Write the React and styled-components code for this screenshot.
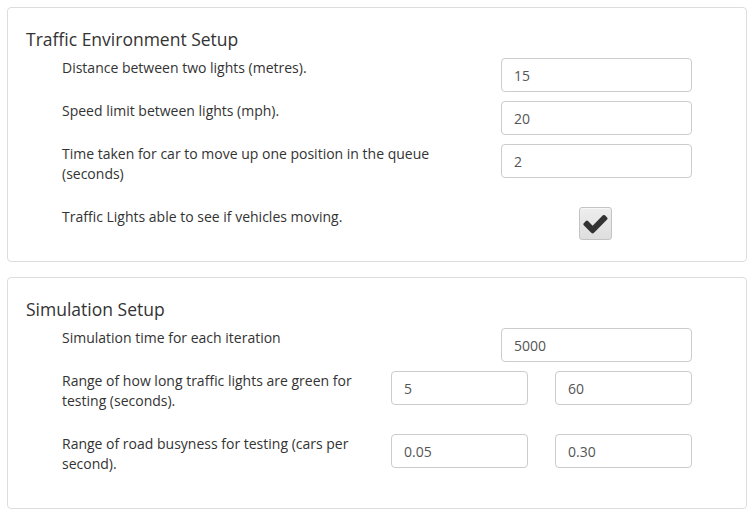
import React from "react";
import styled, { createGlobalStyle } from "styled-components";

const GlobalStyle = createGlobalStyle`
	body {
		margin: 0;
		background: #fff;
		font-family: "Segoe UI", "Open Sans", "Noto Sans", sans-serif;
		color: #333;
	}
`;

const Page = styled.div`
	display: flex;
	flex-direction: column;
	gap: 15px;
	padding: 7px;
	width: 754px;
	box-sizing: border-box;
`;

const Card = styled.section`
	border: 1px solid #ddd;
	border-radius: 4px;
	padding: 20px 54px 20px 18px;
`;

const Title = styled.h3`
	margin: 0 0 8px;
	font-size: 17.5px;
	line-height: 22px;
	font-weight: 500;
	color: #333;
`;

const Rows = styled.div`
	display: flex;
	flex-direction: column;
	gap: 9px;
	margin-left: 36px;
`;

const Row = styled.div`
	display: grid;
	grid-template-columns: ${(p) => (p.$range ? "1fr 137px 137px" : "1fr 191px")};
	column-gap: ${(p) => (p.$range ? "27px" : "30px")};
	align-items: start;
`;

const Label = styled.div`
	font-size: 14px;
	line-height: 20px;
	margin-bottom: 14px;
	margin-right: ${(p) => (p.$range ? "-11px" : "0")};
`;

const Input = styled.input`
	box-sizing: border-box;
	width: 100%;
	height: 34px;
	padding: 0 12px;
	border: 1px solid #ccc;
	border-radius: 4px;
	font-family: inherit;
	font-size: 14px;
	color: #555;
	background: #fff;
	outline: none;
`;

const CheckCell = styled.div`
	display: flex;
	justify-content: center;
	padding-right: 2px;
`;

const CheckBox = styled.span`
	box-sizing: border-box;
	width: 33px;
	height: 33px;
	display: flex;
	align-items: center;
	justify-content: center;
	border: 1px solid #c4c4c4;
	border-radius: 3px;
	background: linear-gradient(#eeeeee, #dedede);
	box-shadow: inset 0 1px 0 rgba(255, 255, 255, 0.6);
`;

function Check() {
	return (
		<svg width="25" height="22" viewBox="100 250 1600 1330" fill="#333">
			<path d="M1671 566q0 40-28 68l-724 724-136 136q-28 28-68 28t-68-28l-136-136-362-362q-28-28-28-68t28-68l136-136q28-28 68-28t68 28l294 295 656-657q28-28 68-28t68 28l136 136q28 28 28 68z" />
		</svg>
	);
}

function Field({ label, value }) {
	return (
		<Row>
			<Label>{label}</Label>
			<Input defaultValue={value} />
		</Row>
	);
}

function RangeField({ label, min, max }) {
	return (
		<Row $range>
			<Label $range>{label}</Label>
			<Input defaultValue={min} />
			<Input defaultValue={max} />
		</Row>
	);
}

export default function App() {
	return (
		<>
			<GlobalStyle />
			<Page>
				<Card>
					<Title>Traffic Environment Setup</Title>
					<Rows>
						<Field label="Distance between two lights (metres)." value="15" />
						<Field label="Speed limit between lights (mph)." value="20" />
						<Field
							label="Time taken for car to move up one position in the queue (seconds)"
							value="2"
						/>
						<Row>
							<Label>Traffic Lights able to see if vehicles moving.</Label>
							<CheckCell>
								<CheckBox>
									<Check />
								</CheckBox>
							</CheckCell>
						</Row>
					</Rows>
				</Card>
				<Card>
					<Title>Simulation Setup</Title>
					<Rows>
						<Field label="Simulation time for each iteration" value="5000" />
						<RangeField
							label="Range of how long traffic lights are green for testing (seconds)."
							min="5"
							max="60"
						/>
						<RangeField
							label="Range of road busyness for testing (cars per second)."
							min="0.05"
							max="0.30"
						/>
					</Rows>
				</Card>
			</Page>
		</>
	);
}
